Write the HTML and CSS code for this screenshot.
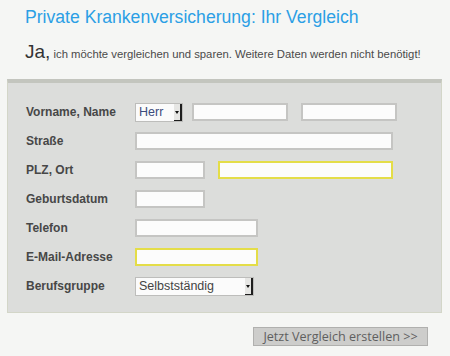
FILE: index.html
```html
<!DOCTYPE html>
<html>
<head>
  <meta charset="UTF-8" />
  <title>Private Krankenversicherung: Ihr Vergleich</title>
  <link rel="stylesheet" href="styles.css">
</head>
<body>

  <h1 class="title">Private Krankenversicherung: Ihr Vergleich</h1>
  <p class="intro"><span class="ja">Ja,</span> ich möchte vergleichen und sparen. Weitere Daten werden nicht benötigt!</p>

  <div class="panel">
    <div class="row">
      <label>Vorname, Name</label>
      <div class="select w-anrede"><span class="val blue">Herr</span><span class="arrow"></span></div>
      <input class="field w-vorname ml-9" type="text">
      <input class="field w-name ml-13" type="text">
    </div>
    <div class="row">
      <label>Straße</label>
      <input class="field w-strasse" type="text">
    </div>
    <div class="row">
      <label>PLZ, Ort</label>
      <input class="field w-plz" type="text">
      <input class="field w-ort ml-13 hint" type="text">
    </div>
    <div class="row">
      <label>Geburtsdatum</label>
      <input class="field w-plz" type="text">
    </div>
    <div class="row">
      <label>Telefon</label>
      <input class="field w-tel" type="text">
    </div>
    <div class="row">
      <label>E-Mail-Adresse</label>
      <input class="field w-tel hint" type="text">
    </div>
    <div class="row">
      <label>Berufsgruppe</label>
      <div class="select w-beruf"><span class="val">Selbstständig</span><span class="arrow"></span></div>
    </div>
  </div>

  <div class="actions">
    <button class="submit">Jetzt Vergleich erstellen &gt;&gt;</button>
  </div>

</body>
</html>
```

FILE: styles.css
```css
body {
  background: #f5f6f4;
  color: #444;
  font-family: "Liberation Sans", Arial, sans-serif;
  margin: 0;
  padding: 0;
}

.title {
  margin: 0;
  padding: 6px 0 0 25px;
  font-size: 17.6px;
  font-weight: normal;
  line-height: 22px;
  color: #2b9fe5;
}

.intro {
  margin: 13px 0 0 25px;
  font-size: 11.3px;
  line-height: 22px;
  color: #4a4a4a;
}

.ja {
  font-size: 19px;
  color: #333;
}

.panel {
  margin: 14px 0 0 7px;
  width: 435px;
  box-sizing: border-box;
  background: #dcdddb;
  border: 1px solid #d3d6c8;
  border-top: 4px solid #c3c5be;
  padding: 20px 0 6px 18px;
}

.row {
  display: flex;
  align-items: center;
  height: 18px;
  margin-bottom: 11px;
}

.row label {
  width: 109px;
  flex: none;
  font-size: 12px;
  font-weight: bold;
  color: #474747;
}

.field {
  height: 18px;
  box-sizing: border-box;
  margin: 0;
  padding: 0;
  background: #fcfcfc;
  border: 2px solid #c5c5c3;
  outline: none;
}

.hint {
  border-color: #e4dd48;
}

.ml-9 { margin-left: 9px; }
.ml-13 { margin-left: 13px; }

.w-anrede { width: 48px; }
.w-vorname { width: 96px; }
.w-name { width: 96px; }
.w-strasse { width: 258px; }
.w-plz { width: 70px; }
.w-ort { width: 175px; }
.w-tel { width: 123px; }
.w-beruf { width: 119px; }

.select {
  height: 19px;
  box-sizing: border-box;
  display: flex;
  background: #fbfbfb;
  border: 1px solid #bdbdbb;
}

.select .val {
  flex: 1;
  padding-left: 3px;
  font-size: 12.5px;
  line-height: 17px;
  color: #444;
}

.select .val.blue {
  color: #3c4c7c;
}

.arrow {
  position: relative;
  width: 6px;
  background: #e6e6e4;
  border-right: 2px solid #1e1e1e;
  border-bottom: 1px solid #1e1e1e;
}

.arrow::after {
  content: '';
  position: absolute;
  left: 1px;
  top: 7px;
  border-left: 2px solid transparent;
  border-right: 2px solid transparent;
  border-top: 3px solid #111;
}

.actions {
  display: flex;
  justify-content: flex-end;
  padding: 14px 22px 0 0;
}

.submit {
  width: 175px;
  height: 19px;
  padding: 0;
  font-family: "Open Sans", "DejaVu Sans", sans-serif;
  font-size: 12.6px;
  line-height: 17px;
  color: #5f5f5f;
  background: #cdcdcb;
  border: 1px solid #b0b0ae;
  border-radius: 0;
  cursor: pointer;
}
```
